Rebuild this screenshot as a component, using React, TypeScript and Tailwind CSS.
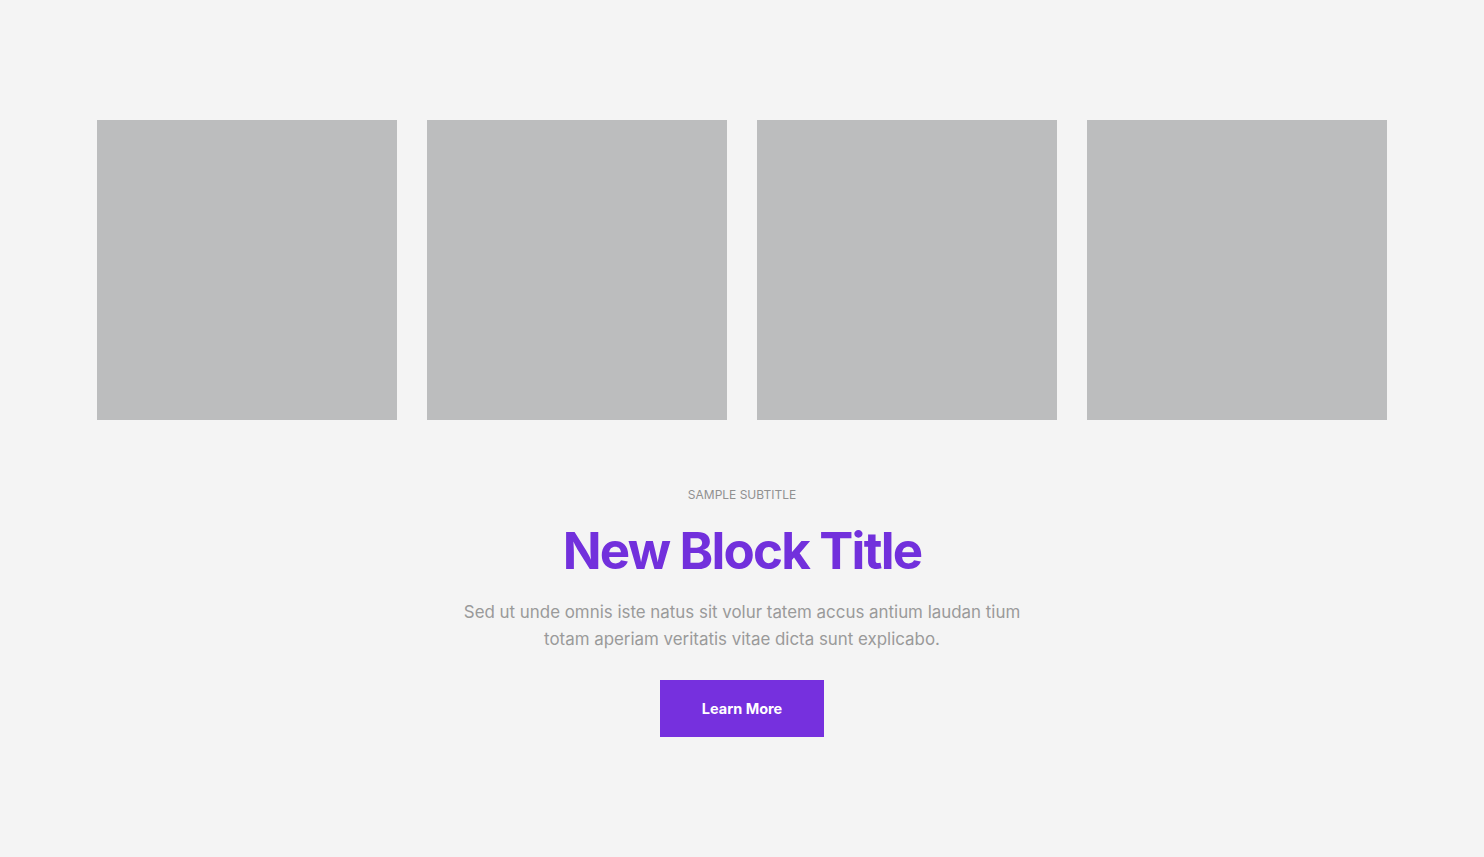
export default function App() {
  const font = { fontFamily: 'Inter, "Noto Sans", sans-serif' };
  return (
    <div className="min-h-[857px] w-full bg-[#f4f4f4] pt-[120px]" style={font}>
      <div className="mx-auto flex w-[1290px] gap-[30px]">
        {[0, 1, 2, 3].map((i) => (
          <div key={i} className="h-[300px] w-[300px] bg-[#bcbdbe]" />
        ))}
      </div>
      <div className="flex flex-col items-center pt-[67px] text-center">
        <div className="text-[12px] leading-[16px] uppercase text-[#909090]">Sample Subtitle</div>
        <h1 className="mt-[20px] text-[51px] font-bold leading-[56px] tracking-[-0.035em] text-[#7230dc]">New Block Title</h1>
        <p className="mt-[20px] w-[590px] text-[16.9px] leading-[27px] text-[#9a9a9a]">
          Sed ut unde omnis iste natus sit volur tatem accus antium laudan tium totam aperiam veritatis vitae dicta sunt explicabo.
        </p>
        <button className="mt-[27px] h-[57px] w-[164px] bg-[#7630de] text-[14.5px] font-bold text-white">Learn More</button>
      </div>
    </div>
  );
}
